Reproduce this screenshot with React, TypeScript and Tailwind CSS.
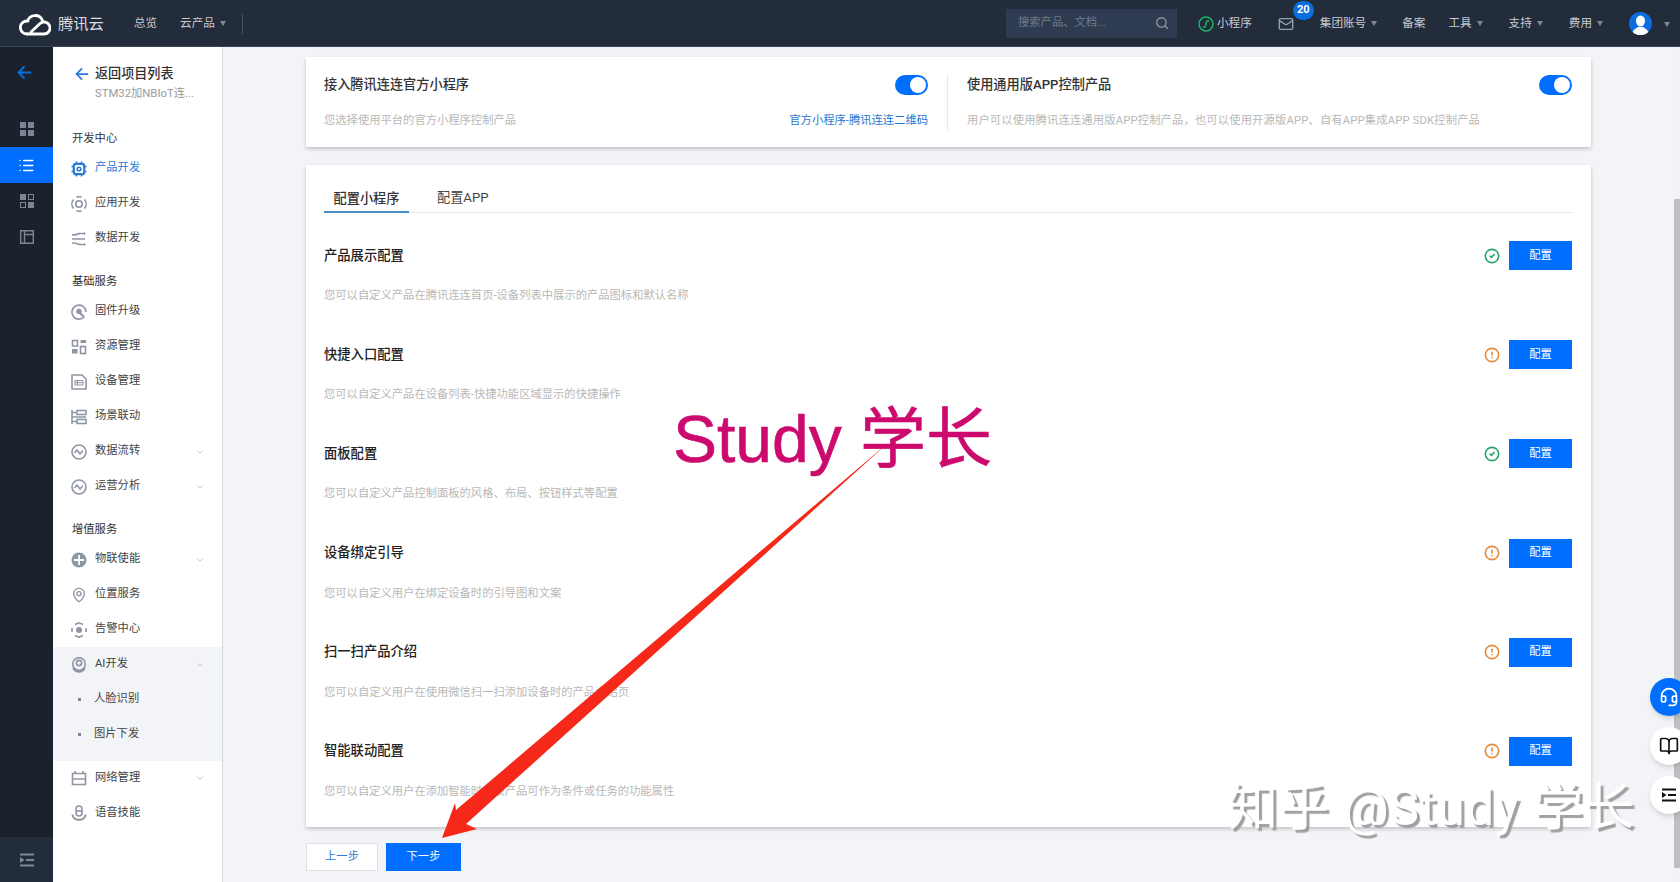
import { BookOpen, ChevronDown, ChevronUp, CircleAlert, CircleCheck, Headset, List, Mail, MapPin, Search } from "lucide-react";
import type { ReactNode } from "react";

const configRows = [
    { title: "产品展示配置", desc: "您可以自定义产品在腾讯连连首页-设备列表中展示的产品图标和默认名称", done: true },
    { title: "快捷入口配置", desc: "您可以自定义产品在设备列表-快捷功能区域显示的快捷操作", done: false },
    { title: "面板配置", desc: "您可以自定义产品控制面板的风格、布局、按钮样式等配置", done: true },
    { title: "设备绑定引导", desc: "您可以自定义用户在绑定设备时的引导图和文案", done: false },
    { title: "扫一扫产品介绍", desc: "您可以自定义用户在使用微信扫一扫添加设备时的产品介绍页", done: false },
    { title: "智能联动配置", desc: "您可以自定义用户在添加智能时，该产品可作为条件或任务的功能属性", done: false },
];

function Svg({ children, className = "text-[#8e96a3]" }: { children: ReactNode; className?: string }) {
    return (
        <svg viewBox="0 0 16 16" className={`w-4 h-4 shrink-0 ${className}`} fill="none" stroke="currentColor" strokeWidth="1.6">
            {children}
        </svg>
    );
}

const icons: Record<string, ReactNode> = {
    chip: (
        <Svg className="text-[#2a7ad6]">
            <rect x="2.8" y="2.8" width="10.4" height="10.4" rx="2" strokeWidth="2.2" />
            <circle cx="8" cy="8" r="1.8" strokeWidth="1.6" />
            <path d="M5.5 0.5v2M10.5 0.5v2M5.5 13.500v2M10.500 13.500v2M0.500 5.500h2M0.500 10.500h2M13.500 5.500h2M13.500 10.500h2" strokeWidth="1.5" />
        </Svg>
    ),
    app: (
        <Svg>
            <circle cx="8" cy="8" r="3.2" />
            <path d="M2.500 3.500A7 7 0 0 0 2.500 12.500M13.500 3.500A7 7 0 0 1 13.500 12.500M5.500 1.200A7 7 0 0 1 10.500 1.200M5.500 14.800A7 7 0 0 0 10.500 14.800" />
        </Svg>
    ),
    data: (
        <Svg>
            <path d="M1 4c4 0 5 0 7-1.500h6M1 8h13M1 12c4 0 5 0 7 1.500h6" />
            <path d="M13 1l2 1.500-2 1.500zM13 12l2 1.500-2 1.500z" fill="currentColor" stroke="none" />
        </Svg>
    ),
    firmware: (
        <Svg>
            <path d="M13.500 12.500A7 7 0 1 1 15 8" />
            <circle cx="8" cy="7.500" r="2.700" fill="currentColor" stroke="none" />
            <path d="M9 9l3.500 3.500" strokeWidth="2" />
        </Svg>
    ),
    resource: (
        <Svg>
            <rect x="1.500" y="1.500" width="5" height="5.500" />
            <rect x="9.500" y="1" width="5.500" height="3" fill="currentColor" stroke="none" />
            <rect x="1" y="10" width="5.500" height="4.500" fill="currentColor" stroke="none" />
            <rect x="9.500" y="7.500" width="5" height="7" />
        </Svg>
    ),
    device: (
        <Svg>
            <path d="M1 1h10l4 4v10H1z" />
            <path d="M4 6.500h8v4.500H4zM4 8.700h8M6.500 6.500v4.500" strokeWidth="1" />
        </Svg>
    ),
    scene: (
        <Svg>
            <path d="M1 1v14" />
            <rect x="6" y="1.500" width="9" height="4" />
            <rect x="6" y="10.500" width="9" height="4" />
            <path d="M1 8h14M1 3.500h5M1 12.500h5" />
        </Svg>
    ),
    pulse: (
        <Svg>
            <circle cx="8" cy="8" r="7" />
            <path d="M3.500 9l2.500-3 3 4 3-3.500" />
        </Svg>
    ),
    iot: (
        <Svg>
            <circle cx="8" cy="8" r="7.500" fill="currentColor" stroke="none" />
            <path d="M8 3v10M3 8h10" stroke="#fff" strokeWidth="1.800" />
        </Svg>
    ),
    alarm: (
        <Svg>
            <path d="M4 2.500L8 .8l4 1.700M15 6v4M1 6v4M4 13.500l4 1.700 4-1.700" />
            <circle cx="8" cy="8" r="3" fill="currentColor" stroke="none" />
        </Svg>
    ),
    ai: (
        <Svg>
            <circle cx="8" cy="7" r="6.300" />
            <circle cx="8" cy="6" r="2.600" />
            <path d="M2.500 11c2 4.500 9 4.500 11 0" strokeWidth="2.600" />
        </Svg>
    ),
    network: (
        <Svg>
            <path d="M1.500 3.500h13v11h-13zM1.500 9h13M4 1v3M12 1v3" />
        </Svg>
    ),
    voice: (
        <Svg>
            <rect x="5" y="1" width="6" height="10" rx="3" />
            <path d="M5 6h6" />
            <path d="M1.500 9.500c0 7 13 7 13 0" strokeWidth="2" />
        </Svg>
    ),
    indent: (
        <Svg className="">
            <path d="M1 2.500h14M7 8h8M1 13.500h14" strokeWidth="1.800" />
            <path d="M1 5l4.500 3L1 11z" fill="currentColor" stroke="none" />
        </Svg>
    ),
};

function Caret() {
    return <span className="block w-0 h-0 ml-[5px] border-x-[3px] border-t-[5px] border-x-transparent border-t-[#7f8896]" />;
}

function NavLink({ label, caret, className = "" }: { label: string; caret?: boolean; className?: string }) {
    return (
        <div className={`flex items-center ${className}`}>
            <span>{label}</span>
            {caret && <Caret />}
        </div>
    );
}

function TopBar() {
    return (
        <header className="h-[47px] pt-[2px] shrink-0 bg-[#232c3b] border-b border-[#3a4658] flex items-center text-[11.6px] text-[#c6cbd3]">
            <svg viewBox="0 0 32 24" className="w-8 h-6 ml-[19px] shrink-0" fill="none" stroke="#fff" strokeWidth="2.800" strokeLinecap="round">
                <path d="M8 22a6.500 6.500 0 1 1 1-12.900M8.500 9A8 8 0 0 1 23.500 8.500" />
                <path d="M8 22h17a6 6 0 1 0-4-10.500L12 20" />
            </svg>
            <span className="ml-[7px] text-[15.300px] text-[#dadde2]">腾讯云</span>
            <NavLink label="总览" className="ml-[30px]" />
            <NavLink label="云产品" caret className="ml-[23px]" />
            <div className="w-px h-5 bg-[#48535f] ml-[16px]" />
            <div className="flex-1" />
            <div className="w-[171px] h-[29px] -mt-[2px] bg-[#2f3b50] pl-3 pr-[8px] flex items-center justify-between text-[#6f7a8c]">
                <span className="text-[11.300px]">搜索产品、文档...</span>
                <Search size={14} strokeWidth={2.4} className="text-[#8c95a3]" />
            </div>
            <svg viewBox="0 0 16 16" className="w-4 h-4 ml-[21px] shrink-0" fill="none" stroke="#20b26b" strokeWidth="1.500">
                <circle cx="8" cy="8" r="7" />
                <path d="M5 10.500c1.500 1.500 3 .5 3-2.500s1.500-4 3-2.500" />
            </svg>
            <span className="ml-[3px]">小程序</span>
            <div className="relative ml-[26px]">
                <Mail size={16} className="text-[#98a1ae]" />
                <span className="absolute -top-[15px] left-[15px] w-[21px] h-[19px] rounded-full bg-[#0a6ee0] text-white text-[11px] font-bold flex items-center justify-center">20</span>
            </div>
            <NavLink label="集团账号" caret className="ml-[26px]" />
            <NavLink label="备案" className="ml-[25px]" />
            <NavLink label="工具" caret className="ml-[23px]" />
            <NavLink label="支持" caret className="ml-[26px]" />
            <NavLink label="费用" caret className="ml-[26px]" />
            <div className="w-[23px] h-[23px] -mt-[2px] ml-[26px] rounded-full bg-[#0a6ee0] overflow-hidden shrink-0 flex justify-center">
                <svg viewBox="0 0 23 23" className="w-[23px] h-[23px]" fill="#fff">
                    <ellipse cx="11.500" cy="9" rx="4.500" ry="5.500" />
                    <path d="M3 23c0-5 4-6.500 6-8h5c2 1.500 6 3 6 8z" />
                </svg>
            </div>
            <span className="ml-[7px] mr-[10px]"><Caret /></span>
        </header>
    );
}

function RailSquares({ outline }: { outline?: boolean }) {
    return (
        <svg viewBox="0 0 14 14" className="w-[14px] h-[14px]" fill="#7c8594" stroke="#7c8594">
            <rect x="0.500" y="0.500" width="5" height="5" />
            <rect x="8.500" y="0.500" width="5" height="5" fill={outline ? "none" : "#7c8594"} />
            <rect x="0.500" y="8.500" width="5" height="5" fill={outline ? "none" : "#7c8594"} />
            <rect x="8.500" y="8.500" width="5" height="5" />
        </svg>
    );
}

function Rail() {
    return (
        <aside className="w-[53px] shrink-0 bg-[#1b222e] flex flex-col">
            <div className="h-[64px] flex items-center justify-center text-[#0a6ed9] pr-1 pb-[14px]">
                <svg viewBox="0 0 16 16" className="w-[15px] h-[15px]" fill="none" stroke="currentColor" strokeWidth="2.200">
                    <path d="M15 8H2M8 1.500L1.800 8 8 14.500" />
                </svg>
            </div>
            <div className="h-[36px] flex items-center justify-center"><RailSquares /></div>
            <div className="h-[36px] flex items-center justify-center bg-[#006eff] text-white"><List size={17} /></div>
            <div className="h-[36px] flex items-center justify-center"><RailSquares outline /></div>
            <div className="h-[36px] flex items-center justify-center">
                <svg viewBox="0 0 14 14" className="w-[14px] h-[14px]" fill="none" stroke="#7c8594" strokeWidth="1.400">
                    <path d="M.7.7h12.600v12.600H.7zM4.500.7v12.600M4.500 4.500h8.800" />
                </svg>
            </div>
            <div className="mt-auto h-[45px] bg-[#232c3a] flex items-center justify-center text-[#808998]">
                {icons.indent}
            </div>
        </aside>
    );
}

function MenuItem({ icon, label, active, chevron }: { icon: string; label: string; active?: boolean; chevron?: "down" | "up" }) {
    return (
        <div className={`h-[35px] flex items-center pl-[18px] pr-[17px] text-[11.300px] ${active ? "text-[#2a7ad6]" : "text-[#444]"}`}>
            <span className="w-[24px]">{icons[icon]}</span>
            <span className="flex-1">{label}</span>
            {chevron === "down" && <ChevronDown size={10} className="text-[#b5bac2]" />}
            {chevron === "up" && <ChevronUp size={10} className="text-[#b5bac2]" />}
        </div>
    );
}

function SectionLabel({ children }: { children: ReactNode }) {
    return <div className="h-[18px] leading-[18px] pl-[19px] text-[11.300px] text-[#333] mb-[3.500px]">{children}</div>;
}

function SubItem({ label }: { label: string }) {
    return (
        <div className="h-[35px] flex items-center pl-[25px] text-[11.300px] text-[#444]">
            <span className="w-[3px] h-[3px] bg-[#888] mr-[13px]" />
            {label}
        </div>
    );
}

function Sidebar() {
    return (
        <nav className="w-[170px] shrink-0 bg-white border-r border-[#d6dbe3] pt-[16.500px]">
            <div className="flex items-center h-5 pl-[22px]">
                <svg viewBox="0 0 16 16" className="w-[14px] h-[14px] text-[#2a7ad6] mr-[6px]" fill="none" stroke="currentColor" strokeWidth="2">
                    <path d="M15 8H2M8 1.500L1.800 8 8 14.500" />
                </svg>
                <span className="text-[13.100px] font-medium text-[#333]">返回项目列表</span>
            </div>
            <div className="h-[18px] leading-[18px] mt-px pl-[42px] text-[11.300px] text-[#999] whitespace-nowrap">STM32加NBIoT连...</div>
            <div className="mt-[27px]">
                <SectionLabel>开发中心</SectionLabel>
                <MenuItem icon="chip" label="产品开发" active />
                <MenuItem icon="app" label="应用开发" />
                <MenuItem icon="data" label="数据开发" />
            </div>
            <div className="mt-[16.500px]">
                <SectionLabel>基础服务</SectionLabel>
                <MenuItem icon="firmware" label="固件升级" />
                <MenuItem icon="resource" label="资源管理" />
                <MenuItem icon="device" label="设备管理" />
                <MenuItem icon="scene" label="场景联动" />
                <MenuItem icon="pulse" label="数据流转" chevron="down" />
                <MenuItem icon="pulse" label="运营分析" chevron="down" />
            </div>
            <div className="mt-[16.500px]">
                <SectionLabel>增值服务</SectionLabel>
                <MenuItem icon="iot" label="物联使能" chevron="down" />
                <div className="h-[35px] flex items-center pl-[18px] text-[11.300px] text-[#444]">
                    <span className="w-[24px]"><MapPin size={16} className="text-[#8e96a3]" /></span>
                    位置服务
                </div>
                <MenuItem icon="alarm" label="告警中心" />
            </div>
            <div className="bg-[#f2f4f8] pb-[8.500px]">
                <MenuItem icon="ai" label="AI开发" chevron="up" />
                <SubItem label="人脸识别" />
                <SubItem label="图片下发" />
            </div>
            <div>
                <MenuItem icon="network" label="网络管理" chevron="down" />
                <MenuItem icon="voice" label="语音技能" />
            </div>
        </nav>
    );
}

function Toggle() {
    return (
        <div className="w-[33px] h-5 rounded-full bg-[#006eff] flex items-center justify-end pr-[2px] shrink-0">
            <div className="w-4 h-4 rounded-full bg-white" />
        </div>
    );
}

function AccessOption({ title, desc, link, divider, descClass = "" }: { title: string; desc: string; link?: string; divider?: boolean; descClass?: string }) {
    return (
        <div className={`h-[55px] flex flex-col justify-between ${divider ? "pr-[19px] border-r border-[#e8e8e8]" : "pl-[19px]"}`}>
            <div className="flex items-center justify-between h-5">
                <h3 className="text-[13.200px] font-medium text-[#333]">{title}</h3>
                <Toggle />
            </div>
            <div className="flex items-center justify-between h-[18px] text-[11.300px]">
                <p className={`text-[#b8b8b8] ${descClass}`}>{desc}</p>
                {link && <a className="text-[#1f78d1]">{link}</a>}
            </div>
        </div>
    );
}

function ConfigRow({ title, desc, done }: { title: string; desc: string; done: boolean }) {
    return (
        <div className="h-[99.200px] pt-[28px]">
            <div className="flex items-center justify-between h-[29px]">
                <h4 className="text-[13.300px] font-medium text-[#222]">{title}</h4>
                <div className="flex items-center gap-[9px]">
                    {done
                        ? <CircleCheck size={16} strokeWidth={2.4} className="text-[#29a56c]" />
                        : <CircleAlert size={16} strokeWidth={2.4} className="text-[#e58a3b]" />}
                    <button className="w-[63px] h-[29px] pt-px bg-[#006eff] text-white text-[11.300px]">配置</button>
                </div>
            </div>
            <p className="mt-[17px] h-[18px] leading-[18px] text-[11.300px] text-[#b8b8b8]">{desc}</p>
        </div>
    );
}

function Content() {
    return (
        <main className="flex-1 min-w-0 pt-[10px] pl-[83px]">
            <div className="w-[1285px]">
                <section className="h-[90px] bg-white shadow-[0_2px_4px_rgba(0,0,0,0.2)] pl-[18px] pr-[19px] pt-[18px] grid grid-cols-2">
                    <AccessOption title="接入腾讯连连官方小程序" desc="您选择使用平台的官方小程序控制产品" link="官方小程序-腾讯连连二维码" divider />
                    <AccessOption title="使用通用版APP控制产品" desc="用户可以使用腾讯连连通用版APP控制产品，也可以使用开源版APP、自有APP集成APP SDK控制产品" descClass="tracking-[0.14px]" />
                </section>
                <section className="mt-[18px] bg-white shadow-[0_2px_4px_rgba(0,0,0,0.2)] pl-[18px] pr-[19px] pb-[19px]">
                    <div className="h-[48px] border-b border-[#e5e8ec] flex items-end text-[13.200px]">
                        <div className="w-[85px] h-[26px] -mb-px text-center leading-[24px] border-b-2 border-[#4a90c8] font-medium text-[#333]">配置小程序</div>
                        <div className="h-[26px] ml-[28px] leading-[24px] text-[#444]">配置APP</div>
                    </div>
                    {configRows.map((row) => (
                        <ConfigRow key={row.title} {...row} />
                    ))}
                </section>
                <div className="mt-[16px] flex gap-2 text-[11.300px]">
                    <button className="w-[72px] h-[28px] bg-white border border-[#dcdfe4] text-[#2a7ad6]">上一步</button>
                    <button className="w-[75px] h-[28px] bg-[#006eff] text-white">下一步</button>
                </div>
            </div>
        </main>
    );
}

function Scrollbar() {
    return (
        <div className="w-[6px] shrink-0 bg-[#f1f2f4] pt-[152px]">
            <div className="h-[669px] bg-[#bdbfc2]" />
        </div>
    );
}

export default function App() {
    return (
        <div className="relative w-[1680px] h-[882px] overflow-hidden bg-[#f2f4f8] flex flex-col [font-family:Roboto,'Noto_Sans_CJK_SC',sans-serif]">
            <TopBar />
            <div className="flex flex-1 min-h-0">
                <Rail />
                <Sidebar />
                <Content />
                <Scrollbar />
            </div>

            {/* annotations pasted on top of the screenshot */}
            <svg className="absolute inset-0 w-[1680px] h-[882px] pointer-events-none" viewBox="0 0 1680 882">
                <polygon points="442,838 455,803 456,810 888,443 466,824 477,829" fill="#f5281a" />
            </svg>
            <div className="absolute left-[673px] top-[395px] text-[66px] leading-[88px] text-[#cc0a6e] whitespace-nowrap [-webkit-text-stroke:0.6px_#cc0a6e] [font-family:'Liberation_Sans','Noto_Sans_CJK_SC',sans-serif]">Study 学长</div>
            <div className="absolute left-[1228px] top-[772px] text-[50px] leading-[72px] tracking-[1px] text-white whitespace-nowrap [text-shadow:3px_3px_1px_#a0a0a0]">知乎 @Study 学长</div>

            <div className="absolute left-[1650px] top-[678px] flex flex-col gap-[11px]">
                <div className="w-[38px] h-[38px] rounded-full bg-[#006eff] flex items-center justify-center text-white shadow-md"><Headset size={20} /></div>
                <div className="w-[38px] h-[38px] rounded-full bg-white flex items-center justify-center text-[#111] shadow-md"><BookOpen size={20} /></div>
                <div className="w-[38px] h-[38px] rounded-full bg-white flex items-center justify-center text-[#111] shadow-md">{icons.indent}</div>
            </div>
        </div>
    );
}
